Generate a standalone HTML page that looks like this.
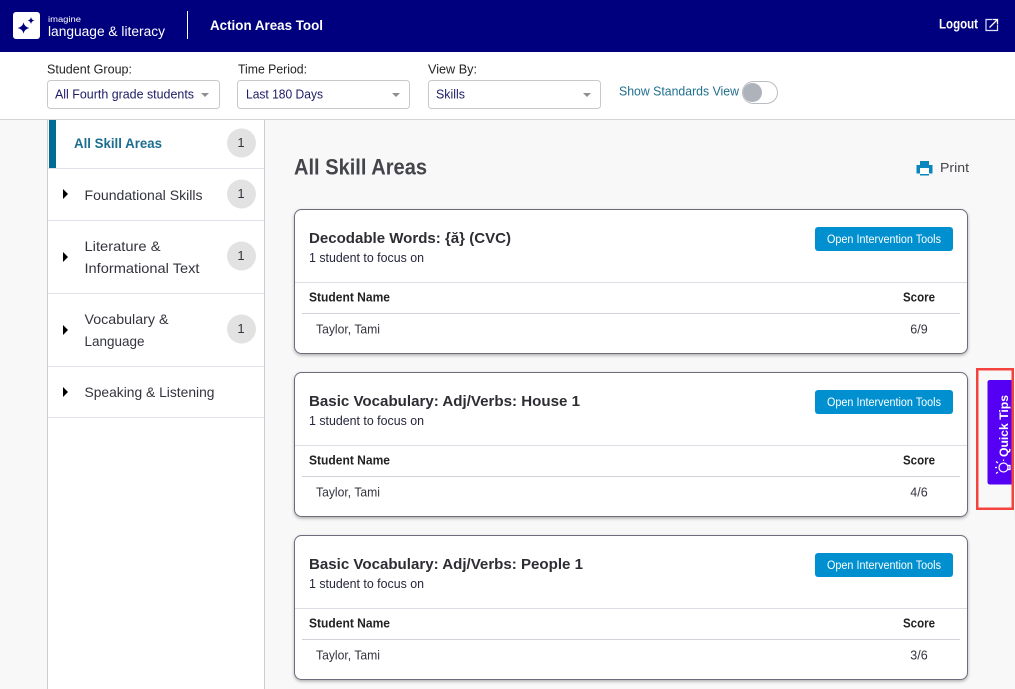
<!DOCTYPE html>
<html lang="en"><head><meta charset="utf-8"><title>Action Areas Tool</title>
<style>
html,body{margin:0;padding:0;width:1015px;height:689px;overflow:hidden;background:#f8f8f8}
svg{display:block;font-family:"Liberation Sans",sans-serif}
text{white-space:pre}
</style></head><body>
<svg width="1015" height="689" viewBox="0 0 1015 689" xmlns="http://www.w3.org/2000/svg">
<defs>
<filter id="sh" x="-5%" y="-5%" width="110%" height="115%"><feDropShadow dx="0" dy="1.5" stdDeviation="1.5" flood-color="#000" flood-opacity=".3"/></filter>
<g id="caret"><path d="M0 0L5 5L0 10Z" fill="#000"/></g>
<g id="tri"><path d="M0 0H8L4 4Z" fill="#8f8f8f"/></g>
<g id="btn"><rect x="815" y="227" width="138" height="24" rx="3" fill="#0090cf"/><text x="827" y="243" font-size="11.5" fill="#fff" textLength="114" lengthAdjust="spacingAndGlyphs">Open Intervention Tools</text></g>
</defs>
<rect width="1015" height="689" fill="#f8f8f8"/>
<!-- header -->
<rect width="1015" height="52" fill="#00007f"/>
<rect x="13" y="12" width="27" height="27" rx="3" fill="#fff"/>
<path d="M23.500 22.500Q24.500 27 29.500 28Q24.500 29 23.500 33.500Q22.500 29 17.500 28Q22.500 27 23.500 22.500Z" fill="#00007f"/>
<path d="M31 17Q31.500 20 34.500 20.500Q31.500 21 31 24Q30.500 21 27.500 20.500Q30.500 20 31 17Z" fill="#00007f"/>
<text x="48" y="22" font-size="8" fill="#fff" textLength="33" lengthAdjust="spacingAndGlyphs">imagine</text>
<text x="48" y="36" font-size="13.5" fill="#fff" textLength="117" lengthAdjust="spacingAndGlyphs">language &amp; literacy</text>
<rect x="187" y="11" width="1" height="28" fill="#fff"/>
<text x="210" y="30" font-size="13.5" font-weight="700" fill="#fff" textLength="113" lengthAdjust="spacingAndGlyphs">Action Areas Tool</text>
<text x="939" y="28.500" font-size="13.5" font-weight="700" fill="#fff" textLength="39" lengthAdjust="spacingAndGlyphs">Logout</text>
<path d="M992 19.500H986V30.500H997.500V25" fill="none" stroke="#dfe0f2" stroke-width="1.200"/>
<path d="M989.500 27.500L997 20M992.500 19.500H997.500V24.500" fill="none" stroke="#fff" stroke-width="1.300"/>
<!-- filter bar -->
<rect y="52" width="1015" height="67" fill="#fff"/>
<rect y="119" width="1015" height="1" fill="#d5d5d5"/>
<text x="47" y="73.500" font-size="12.5" fill="#222" textLength="85" lengthAdjust="spacingAndGlyphs">Student Group:</text>
<text x="238" y="73.500" font-size="12.5" fill="#222" textLength="69" lengthAdjust="spacingAndGlyphs">Time Period:</text>
<text x="428" y="73.500" font-size="12.5" fill="#222" textLength="49" lengthAdjust="spacingAndGlyphs">View By:</text>
<rect x="47.5" y="80.5" width="172" height="28" rx="3" fill="#fff" stroke="#c8c9cc"/>
<rect x="237.5" y="80.5" width="172" height="28" rx="3" fill="#fff" stroke="#c8c9cc"/>
<rect x="428.5" y="80.5" width="172" height="28" rx="3" fill="#fff" stroke="#c8c9cc"/>
<text x="55" y="98.500" font-size="12.5" fill="#1c1c66" textLength="139" lengthAdjust="spacingAndGlyphs">All Fourth grade students</text>
<text x="246" y="98.500" font-size="12.5" fill="#1c1c66" textLength="77" lengthAdjust="spacingAndGlyphs">Last 180 Days</text>
<text x="436" y="98.500" font-size="12.5" fill="#1c1c66" textLength="29" lengthAdjust="spacingAndGlyphs">Skills</text>
<use href="#tri" x="201" y="93"/><use href="#tri" x="392" y="93"/><use href="#tri" x="583" y="93"/>
<text x="619" y="95.500" font-size="12.5" fill="#1f6f8f" textLength="120" lengthAdjust="spacingAndGlyphs">Show Standards View</text>
<rect x="742.5" y="81.5" width="35" height="22" rx="11" fill="#fff" stroke="#b9bcc2"/>
<circle cx="752.500" cy="92.500" r="9.500" fill="#aeb2ba"/>
<!-- sidebar -->
<rect x="47" y="120" width="218" height="569" fill="#fff"/>
<rect x="47" y="120" width="1" height="569" fill="#c9ccd1"/>
<rect x="264" y="120" width="1" height="569" fill="#c9ccd1"/>
<rect x="49" y="120" width="7" height="48" fill="#006b94"/>
<g fill="#dfe2e8"><rect x="48" y="168" width="216" height="1"/><rect x="48" y="220" width="216" height="1"/><rect x="48" y="293" width="216" height="1"/><rect x="48" y="366" width="216" height="1"/><rect x="48" y="417" width="216" height="1"/></g>
<text x="74" y="148" font-size="13.5" font-weight="700" fill="#1c6e90" textLength="88" lengthAdjust="spacingAndGlyphs">All Skill Areas</text>
<g font-size="14" fill="#33343d">
<text x="84.500" y="200" textLength="118" lengthAdjust="spacingAndGlyphs">Foundational Skills</text>
<text x="84.500" y="251" textLength="76" lengthAdjust="spacingAndGlyphs">Literature &amp;</text>
<text x="84.500" y="273" textLength="115" lengthAdjust="spacingAndGlyphs">Informational Text</text>
<text x="84.500" y="324" textLength="84" lengthAdjust="spacingAndGlyphs">Vocabulary &amp;</text>
<text x="84.500" y="346" textLength="60" lengthAdjust="spacingAndGlyphs">Language</text>
<text x="84.500" y="397" textLength="130" lengthAdjust="spacingAndGlyphs">Speaking &amp; Listening</text>
</g>
<use href="#caret" x="63" y="189"/><use href="#caret" x="63" y="252"/><use href="#caret" x="63" y="325"/><use href="#caret" x="63" y="387"/>
<g fill="#e2e2e2"><circle cx="241.500" cy="143" r="14.500"/><circle cx="241.500" cy="194" r="14.500"/><circle cx="241.500" cy="256" r="14.500"/><circle cx="241.500" cy="329" r="14.500"/></g>
<g font-size="13" fill="#33343d" text-anchor="middle"><text x="241" y="147">1</text><text x="241" y="198">1</text><text x="241" y="260">1</text><text x="241" y="333">1</text></g>
<!-- main head -->
<text x="294" y="174.500" font-size="22" font-weight="700" fill="#44454b" textLength="133" lengthAdjust="spacingAndGlyphs">All Skill Areas</text>
<path d="M920 165V161H929V165H932.500V173.500H929V175.500H920V173.500H916.500V165Z" fill="#0a86bd"/>
<rect x="920" y="168" width="9" height="6" fill="#fff"/>
<text x="940" y="172" font-size="13" fill="#44454b" textLength="29" lengthAdjust="spacingAndGlyphs">Print</text>
<!-- card 1 -->
<g>
<rect x="294.500" y="209.500" width="673" height="144" rx="7" fill="#fff" stroke="#6c6c7c" filter="url(#sh)"/>
<use href="#btn"/>
<text x="309" y="243" font-size="15" font-weight="700" fill="#2d2d33" textLength="202" lengthAdjust="spacingAndGlyphs">Decodable Words: {ă} (CVC)</text>
<text x="309" y="262" font-size="12.500" fill="#26263c" textLength="115" lengthAdjust="spacingAndGlyphs">1 student to focus on</text>
<rect x="295" y="282" width="672" height="1" fill="#dcdce4"/>
<text x="309" y="301.500" font-size="12.500" font-weight="700" fill="#222" textLength="81" lengthAdjust="spacingAndGlyphs">Student Name</text>
<text x="903" y="301.500" font-size="12.500" font-weight="700" fill="#222" textLength="32" lengthAdjust="spacingAndGlyphs">Score</text>
<rect x="302" y="313" width="658" height="1" fill="#d2d2d8"/>
<text x="316" y="333.500" font-size="12.500" fill="#33343d" textLength="64" lengthAdjust="spacingAndGlyphs">Taylor, Tami</text>
<text x="919" y="333.500" font-size="12.500" fill="#33343d" text-anchor="middle">6/9</text>
</g>
<!-- card 2 -->
<g transform="translate(0,163)">
<rect x="294.500" y="209.500" width="673" height="144" rx="7" fill="#fff" stroke="#6c6c7c" filter="url(#sh)"/>
<use href="#btn"/>
<text x="309" y="243" font-size="15" font-weight="700" fill="#2d2d33" textLength="271" lengthAdjust="spacingAndGlyphs">Basic Vocabulary: Adj/Verbs: House 1</text>
<text x="309" y="262" font-size="12.500" fill="#26263c" textLength="115" lengthAdjust="spacingAndGlyphs">1 student to focus on</text>
<rect x="295" y="282" width="672" height="1" fill="#dcdce4"/>
<text x="309" y="301.500" font-size="12.500" font-weight="700" fill="#222" textLength="81" lengthAdjust="spacingAndGlyphs">Student Name</text>
<text x="903" y="301.500" font-size="12.500" font-weight="700" fill="#222" textLength="32" lengthAdjust="spacingAndGlyphs">Score</text>
<rect x="302" y="313" width="658" height="1" fill="#d2d2d8"/>
<text x="316" y="333.500" font-size="12.500" fill="#33343d" textLength="64" lengthAdjust="spacingAndGlyphs">Taylor, Tami</text>
<text x="919" y="333.500" font-size="12.500" fill="#33343d" text-anchor="middle">4/6</text>
</g>
<!-- card 3 -->
<g transform="translate(0,326)">
<rect x="294.500" y="209.500" width="673" height="144" rx="7" fill="#fff" stroke="#6c6c7c" filter="url(#sh)"/>
<use href="#btn"/>
<text x="309" y="243" font-size="15" font-weight="700" fill="#2d2d33" textLength="274" lengthAdjust="spacingAndGlyphs">Basic Vocabulary: Adj/Verbs: People 1</text>
<text x="309" y="262" font-size="12.500" fill="#26263c" textLength="115" lengthAdjust="spacingAndGlyphs">1 student to focus on</text>
<rect x="295" y="282" width="672" height="1" fill="#dcdce4"/>
<text x="309" y="301.500" font-size="12.500" font-weight="700" fill="#222" textLength="81" lengthAdjust="spacingAndGlyphs">Student Name</text>
<text x="903" y="301.500" font-size="12.500" font-weight="700" fill="#222" textLength="32" lengthAdjust="spacingAndGlyphs">Score</text>
<rect x="302" y="313" width="658" height="1" fill="#d2d2d8"/>
<text x="316" y="333.500" font-size="12.500" fill="#33343d" textLength="64" lengthAdjust="spacingAndGlyphs">Taylor, Tami</text>
<text x="919" y="333.500" font-size="12.500" fill="#33343d" text-anchor="middle">3/6</text>
</g>
<!-- quick tips -->
<path d="M1013 380H990Q987.500 380 987.500 382.500V482Q987.500 484.500 990 484.500H1013Z" fill="#5500f5"/>
<text transform="translate(1008,457) rotate(-90)" font-size="12" font-weight="700" fill="#fff" textLength="62" lengthAdjust="spacingAndGlyphs">Quick Tips</text>
<g fill="none" stroke="#fff" stroke-width="1.200">
<circle cx="1003.500" cy="467.500" r="4.500"/>
<path d="M1008 465.500H1010V469.500H1008"/>
<path d="M995 467.500H997M996 461.500L998 463M996 473.500L998 472M1003.500 459.500V461"/>
</g>
<!-- annotation -->
<rect x="977.250" y="369.250" width="35.500" height="139.500" fill="none" stroke="#f4433f" stroke-width="2.500"/>
<rect x="1014" y="360" width="1" height="160" fill="#f3f3f3"/>
</svg>
</body></html>
